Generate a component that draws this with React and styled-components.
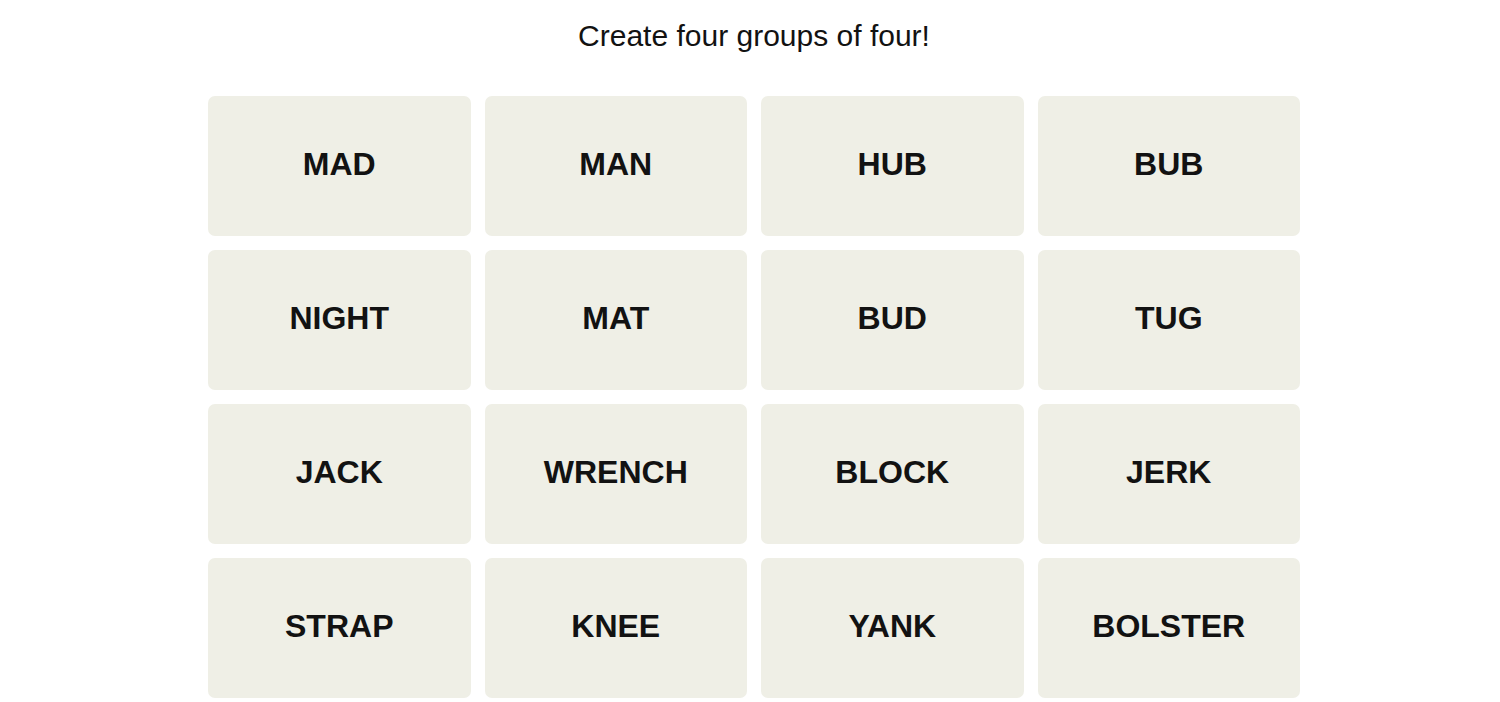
import styled, { createGlobalStyle } from "styled-components";

const GlobalStyle = createGlobalStyle`
  body {
    margin: 0;
    background: #fff;
    font-family: "Liberation Sans", Arial, sans-serif;
  }
`;

const Page = styled.div`
  display: flex;
  flex-direction: column;
  align-items: center;
  padding: 18px 0 0 8px;
`;

const Title = styled.h2`
  margin: 0;
  font-size: 30px;
  font-weight: 400;
  line-height: 36px;
  color: #121212;
`;

const Board = styled.div`
  display: grid;
  grid-template-columns: repeat(4, 1fr);
  grid-auto-rows: 140px;
  gap: 14px;
  width: 1092px;
  margin-top: 42px;
`;

const Tile = styled.button`
  display: flex;
  align-items: center;
  justify-content: center;
  border: none;
  border-radius: 7px;
  background: #efefe6;
  color: #121212;
  font-family: "Liberation Sans", Arial, sans-serif;
  font-size: 32px;
  font-weight: 700;
  text-transform: uppercase;
  cursor: pointer;
  padding: 0 0 4px;
`;

const words = [
  "MAD", "MAN", "HUB", "BUB",
  "NIGHT", "MAT", "BUD", "TUG",
  "JACK", "WRENCH", "BLOCK", "JERK",
  "STRAP", "KNEE", "YANK", "BOLSTER",
];

export default function App() {
  return (
    <>
      <GlobalStyle />
      <Page>
        <Title>Create four groups of four!</Title>
        <Board>
          {words.map((w) => (
            <Tile key={w}>{w}</Tile>
          ))}
        </Board>
      </Page>
    </>
  );
}
